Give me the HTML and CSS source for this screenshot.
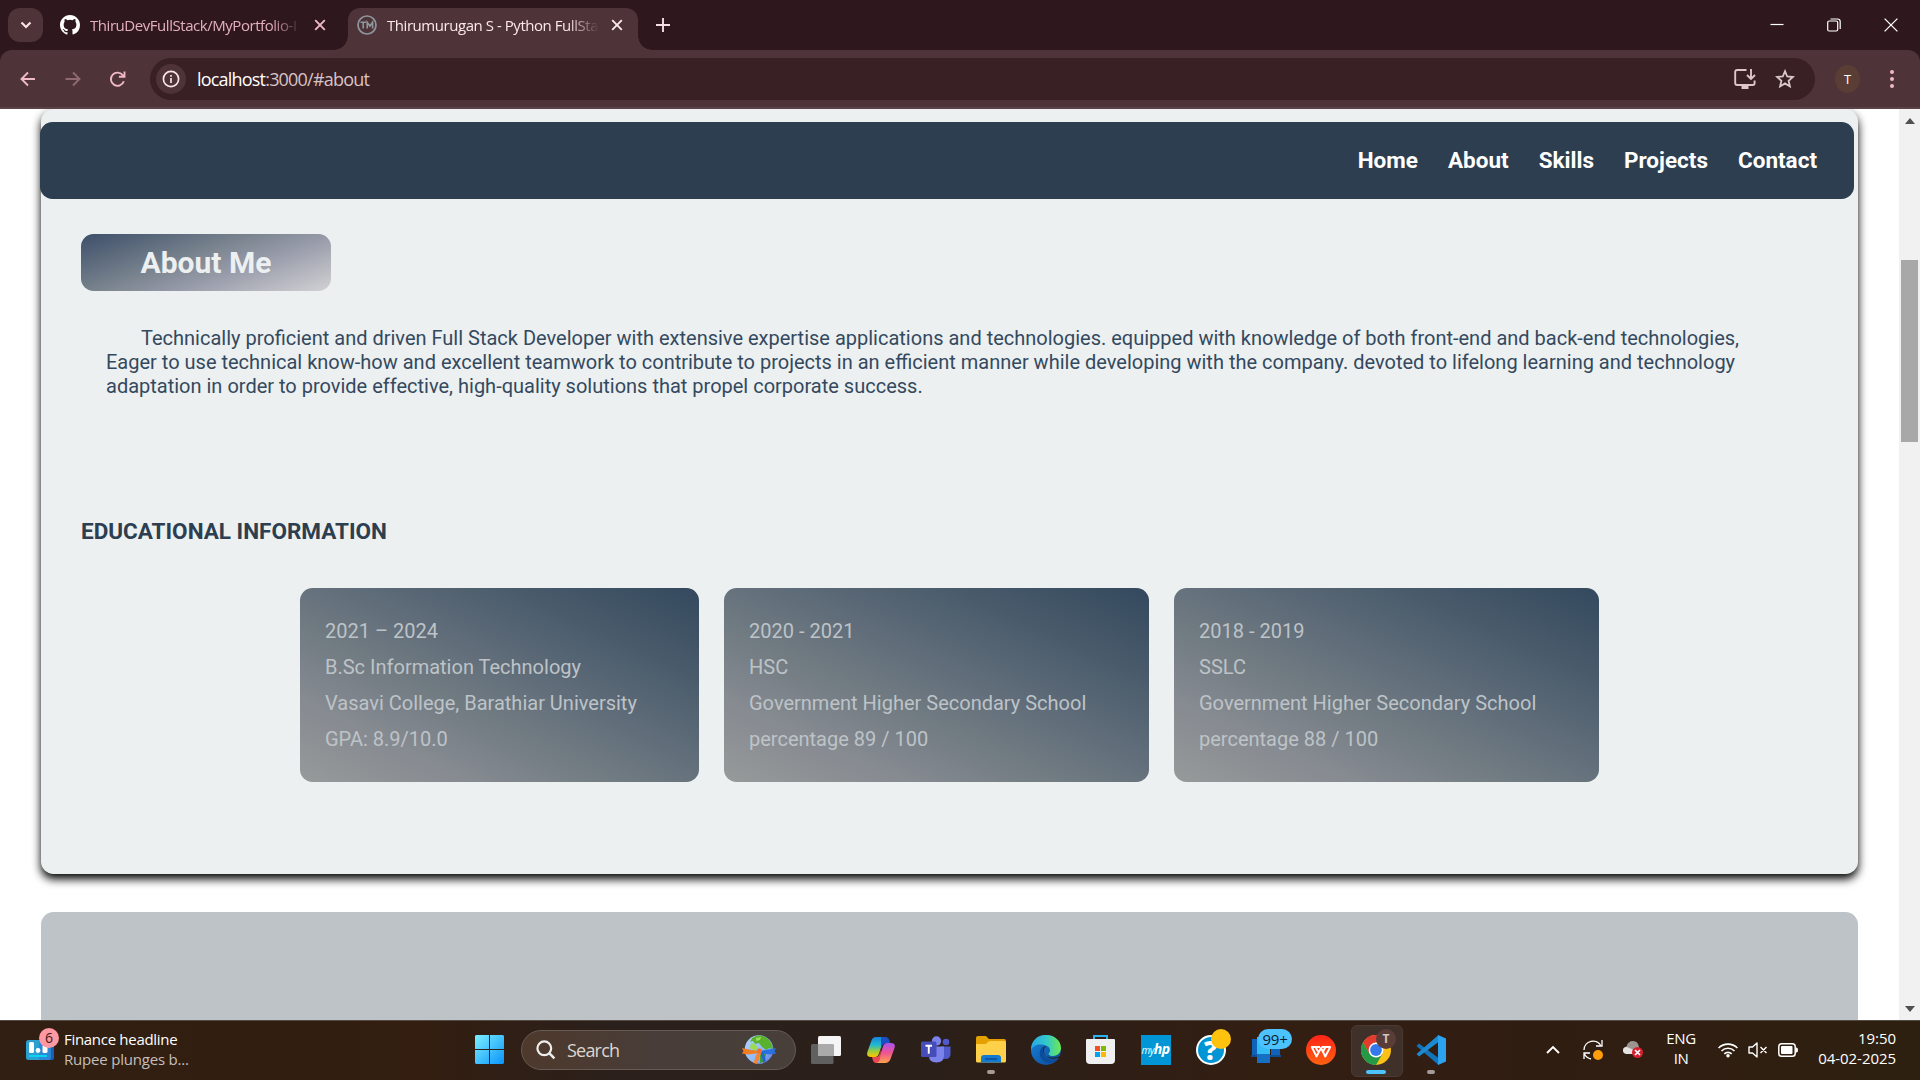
FILE: index.html
```html
<!DOCTYPE html>
<html lang="en">
<head>
<meta charset="utf-8">
<title>Thirumurugan S - Python FullStack</title>
<link rel="stylesheet" href="styles.css">
</head>
<body>
<header class="tabstrip">
  <button class="tab-search"><svg width="14" height="14" viewBox="0 0 14 14"><path d="M2.500 4.500l4.500 4.500 4.500-4.500" fill="none" stroke="#f6e3e5" stroke-width="2.200"/></svg></button>
  <div class="tab">
    <svg class="fav" width="20" height="20" viewBox="0 0 16 16"><path fill="#fff" d="M8 0C3.58 0 0 3.58 0 8c0 3.54 2.29 6.53 5.47 7.59.4.07.55-.17.55-.38 0-.19-.01-.82-.01-1.49-2.01.37-2.53-.49-2.69-.94-.09-.23-.48-.94-.82-1.13-.28-.15-.68-.52-.01-.53.63-.01 1.08.58 1.23.82.72 1.21 1.87.87 2.33.66.07-.52.28-.87.51-1.07-1.78-.2-3.64-.89-3.64-3.95 0-.87.31-1.59.82-2.15-.08-.2-.36-1.02.08-2.12 0 0 .67-.21 2.2.82a7.6 7.6 0 0 1 4 0c1.53-1.04 2.2-.82 2.2-.82.44 1.1.16 1.92.08 2.12.51.56.82 1.27.82 2.15 0 3.07-1.87 3.75-3.65 3.95.29.25.54.73.54 1.48 0 1.07-.01 1.93-.01 2.2 0 .21.15.46.55.38A8.01 8.01 0 0 0 16 8c0-4.42-3.58-8-8-8z"/></svg>
    <span class="tab-title">ThiruDevFullStack/MyPortfolio-I</span>
    <svg class="x" width="12" height="12" viewBox="0 0 12 12"><path d="M1.2 1.2l9.6 9.6M10.800 1.200l-9.600 9.600" stroke="#efb9c6" stroke-width="1.900"/></svg>
  </div>
  <div class="tab active">
    <svg class="fav" width="20" height="20" viewBox="0 0 20 20"><circle cx="10" cy="10" r="9" fill="none" stroke="#8e979d" stroke-width="1.700"/><path d="M3.500 7.200h5.500M6.200 7.200v6.300M10.200 13.500V7.200l2.700 3.800 2.700-3.800v6.300" fill="none" stroke="#8e979d" stroke-width="1.600"/></svg>
    <span class="tab-title">Thirumurugan S - Python FullSta</span>
    <svg class="x" width="12" height="12" viewBox="0 0 12 12"><path d="M1.2 1.2l9.6 9.6M10.800 1.200l-9.600 9.600" stroke="#fbe9ec" stroke-width="1.900"/></svg>
  </div>
  <svg class="plus" width="14" height="14" viewBox="0 0 14 14"><path d="M7 0v14M0 7h14" stroke="#f6dfe2" stroke-width="1.900"/></svg>
  <div class="win">
    <svg width="14" height="14" viewBox="0 0 14 14"><path d="M.5 6.500h13" stroke="#fff" stroke-width="1.200"/></svg>
    <svg width="14" height="14" viewBox="0 0 14 14"><rect x=".7" y="3" width="10" height="10" rx="1.500" fill="none" stroke="#fff" stroke-width="1.200"/><path d="M3.500 1h7a2.700 2.700 0 0 1 2.700 2.700V11" fill="none" stroke="#fff" stroke-width="1.200"/></svg>
    <svg width="14" height="14" viewBox="0 0 14 14"><path d="M.6.6l12.800 12.800M13.400.6L.6 13.400" stroke="#fff" stroke-width="1.300"/></svg>
  </div>
</header>
<div class="toolbar">
  <div class="navs">
    <svg width="20" height="20" viewBox="0 0 20 20"><path d="M17 10H4M10 3.500L3.500 10l6.500 6.500" fill="none" stroke="#efb9c6" stroke-width="1.900"/></svg>
    <svg width="20" height="20" viewBox="0 0 20 20"><path d="M2.500 10h13M10 3.500l6.500 6.500-6.500 6.500" fill="none" stroke="#8f6a71" stroke-width="1.900"/></svg>
    <svg width="20" height="20" viewBox="0 0 20 20"><path d="M15.800 12.200a6.600 6.600 0 1 1-.8-5.600l1 1.400M16.500 2.500v5.300h-5.600" fill="none" stroke="#efb9c6" stroke-width="1.900"/></svg>
  </div>
  <div class="omnibox">
    <span class="info"><svg width="18" height="18" viewBox="0 0 18 18"><circle cx="9" cy="9" r="7.600" fill="none" stroke="#f7e4e7" stroke-width="1.700"/><path d="M9 8v5M9 5v1.800" stroke="#f7e4e7" stroke-width="1.700"/></svg></span>
    <span class="url"><b>localhost</b>:3000/#about</span>
    <svg class="install" width="22" height="22" viewBox="0 0 22 22"><path d="M12.500 2H3.200Q1.200 2 1.200 4v11q0 2 2 2h15.600q1.800 0 1.800-2v-2.500M17 1v9.500M13 7l4 4 4-4" fill="none" stroke="#dcc6ca" stroke-width="1.900"/><path d="M7.500 17h7v4h-7z" fill="#dcc6ca"/></svg>
    <svg class="star" width="20" height="20" viewBox="0 0 20 20"><path d="M10 2.200l2.200 5.300 5.700.5-4.300 3.800 1.300 5.600-4.900-3-4.900 3 1.300-5.600L2.100 8l5.700-.5z" fill="none" stroke="#dcc6ca" stroke-width="1.800"/></svg>
  </div>
  <span class="avatar">T</span>
  <svg class="dots" width="6" height="20" viewBox="0 0 6 20"><g fill="#efb9c6"><circle cx="3" cy="3" r="2"/><circle cx="3" cy="10" r="2"/><circle cx="3" cy="17" r="2"/></g></svg>
</div>
<div class="viewport">
  <main class="page">
    <section class="about">
      <nav class="menu"><a>Home</a><a>About</a><a>Skills</a><a>Projects</a><a>Contact</a></nav>
      <h1 class="badge-title">About Me</h1>
      <p class="bio">Technically proficient and driven Full Stack Developer with extensive expertise applications and technologies. equipped with knowledge of both front-end and back-end technologies,<br>Eager to use technical know-how and excellent teamwork to contribute to projects in an efficient manner while developing with the company. devoted to lifelong learning and technology<br>adaptation in order to provide effective, high-quality solutions that propel corporate success.</p>
      <h2 class="edu-title">EDUCATIONAL INFORMATION</h2>
      <div class="cards">
        <div class="card"><p>2021 – 2024</p><p>B.Sc Information Technology</p><p>Vasavi College, Barathiar University</p><p>GPA: 8.9/10.0</p></div>
        <div class="card"><p>2020 - 2021</p><p>HSC</p><p>Government Higher Secondary School</p><p>percentage 89 / 100</p></div>
        <div class="card"><p>2018 - 2019</p><p>SSLC</p><p>Government Higher Secondary School</p><p>percentage 88 / 100</p></div>
      </div>
    </section>
    <section class="next"></section>
  </main>
  <div class="scrollbar">
    <svg width="10" height="6" viewBox="0 0 10 6"><path d="M5 0l5 6H0z" fill="#505050"/></svg>
    <i class="thumb"></i>
    <svg class="down" width="10" height="6" viewBox="0 0 10 6"><path d="M5 6l5-6H0z" fill="#505050"/></svg>
  </div>
</div>
<footer class="taskbar">
  <div class="widget">
    <div class="widget-icon">
      <svg width="28" height="20" viewBox="0 0 28 20"><rect x="18" width="10" height="20" rx="2" fill="#1660b5"/><rect width="24.500" height="20" rx="2.500" fill="#2a9fd0"/><rect x="13" width="11.500" height="20" rx="2" fill="#2d86d6"/><rect x="3" y="2" width="5" height="11" rx="1.500" fill="#fff"/><circle cx="12" cy="10.500" r="2.400" fill="#fff"/><rect x="16.500" y="5" width="5" height="8" rx="1.500" fill="#fff"/><path d="M3 16h18" stroke="#08d3f4" stroke-width="2"/></svg>
      <b class="count">6</b>
    </div>
    <div class="news"><div>Finance headline</div><div class="dim">Rupee plunges b...</div></div>
  </div>
  <svg class="start" width="29" height="29" viewBox="0 0 29 29"><defs><linearGradient id="w" gradientUnits="userSpaceOnUse" x2="29" y2="29"><stop stop-color="#7cf0ff"/><stop offset="1" stop-color="#0a94fb"/></linearGradient></defs><path fill="url(#w)" d="M1 0h13v14H0V1zM15 0h13l1 1v13H15zM0 15h14v14H1l-1-1zM15 15h14v13l-1 1H15z"/></svg>
  <div class="search">
    <svg width="20" height="20" viewBox="0 0 20 20"><circle cx="8.300" cy="8.300" r="6.900" fill="none" stroke="#eee" stroke-width="2.200"/><path d="M13.200 13.200l5.200 5.200" stroke="#eee" stroke-width="2.500"/></svg>
    <span>Search</span>
    <svg class="globe" width="34" height="30" viewBox="0 0 34 30"><defs><linearGradient id="gl" x2="1" y2="1"><stop stop-color="#b5d6ff"/><stop offset=".6" stop-color="#8fb9f8"/><stop offset="1" stop-color="#546fe0"/></linearGradient></defs><circle cx="17" cy="14.500" r="14.300" fill="url(#gl)"/><path d="M10 3Q17-2 25 3q5 4 6 11l-4-1-3 2-4-3-3-4-4 1-2-3-3 1z" fill="#58b22e"/><path d="M14 3l5-1-1 3-4 1zM9 8l5 2 2 3-3 3-5-3z" fill="#9bdc52"/><path d="M18 17l6 2-1 7-5 2z" fill="#3c9b36"/><path d="M0 13l7 1.500 10 1.500-3 2.500-8 1-6-1 1.500-2.500z" fill="#f07c24"/><path d="M34 13l-7 1.500-10 1.500 3 2.500 8 1 6-1-1.500-2.500z" fill="#2a70e0"/><path d="M16 15l4 1-5 13-3.500-1z" fill="#f58431"/><path d="M18 16l3 0 3 10-2.500 2z" fill="#2466cf"/><rect x="15" y="13.500" width="5" height="5" rx="2" fill="#ed702d"/></svg>
  </div>
  <div class="apps">
    <div class="app"><svg width="30" height="28" viewBox="0 0 30 28"><rect x="7" width="23" height="20" rx="1.500" fill="#f5f5f5"/><rect y="8" width="22.500" height="20" rx="1.500" fill="#606060"/><path d="M7 8h15.500v12H7z" fill="#aaa"/></svg></div>
    <div class="app"><svg width="28" height="26" viewBox="0 0 28 26"><defs><linearGradient id="c1" x2="0" y2="1"><stop stop-color="#1683df"/><stop offset=".4" stop-color="#22b9d2"/><stop offset=".7" stop-color="#9acd3c"/><stop offset="1" stop-color="#ffc400"/></linearGradient><linearGradient id="c2" x2="0" y2="1"><stop stop-color="#a951f0"/><stop offset=".5" stop-color="#ef5590"/><stop offset="1" stop-color="#ffa24c"/></linearGradient></defs><path d="M19 0H9Q5.500 0 4.300 4L.4 15Q-1 20 4 20h4q3 0 4-3.500L15.500 6Q16.500 2 19 0z" fill="url(#c1)"/><path d="M14 0h5q3 0 4 6h-4q-2.500 0-3.500 2.500L14 12z" fill="#1a50c4"/><path d="M9 26h9q4 0 5.500-4L27.500 11Q29 6 24 6h-4q-3 0-4 3.500L12.500 20q-1 4-3.500 6z" fill="url(#c2)"/><path d="M5 20h4q3 0 3.500-3L14 12l-1 10q-1 4-4 4-3 0-4-6z" fill="#e84a55"/></svg></div>
    <div class="app"><svg width="30" height="28" viewBox="0 0 30 28"><circle cx="15.500" cy="5" r="4.700" fill="#7b83eb"/><circle cx="25" cy="6" r="3.300" fill="#5059c9"/><path d="M20 10.500h9.500v7.500q0 5-5 5-4 0-4.500-4z" fill="#5059c9"/><path d="M8 10.500h15v9q0 7-7.500 7T8 20z" fill="#7b83eb"/><rect y="5.500" width="15.500" height="15.500" rx="1.500" fill="#464db8"/><path d="M4.500 9.700h6.500M7.750 9.700v8" stroke="#fff" stroke-width="1.900"/></svg></div>
    <div class="app run"><svg width="30" height="27" viewBox="0 0 30 27"><path d="M0 2q0-2 2-2h8l3 3h15q2 0 2 2v8H0z" fill="#e3a000"/><path d="M0 8h10q2-3 4-3h14q2 0 2 2v18q0 1.500-1.500 1.500h-27Q0 26.500 0 25z" fill="#ffd04a"/><path d="M5 26.500V22q0-3 3-3h14q3 0 3 3v4.500z" fill="#127acf"/><path d="M9 23h12" stroke="#0a4f98" stroke-width="1.500"/></svg></div>
    <div class="app"><svg width="30" height="30" viewBox="0 0 30 30"><defs><linearGradient id="e1" x2="1"><stop stop-color="#28a8e4"/><stop offset=".5" stop-color="#31c7cf"/><stop offset="1" stop-color="#6ee94f"/></linearGradient><linearGradient id="e2" x2="1" y2="1"><stop stop-color="#1886dc"/><stop offset="1" stop-color="#0c4693"/></linearGradient></defs><circle cx="15" cy="15" r="15" fill="url(#e2)"/><path d="M0 15C0 6 6 0 15 0c9 0 15 6 15 13 0 5-4 8-8 8-4 0-5-2-4-3 2-2 1-6-2-7C9 8 2 10 0 15z" fill="url(#e1)"/><path d="M12 11.500c-6 5-3 15 5 16 4 .5 8-1 11-4-7 3-15 0-16-6-.5-3 1-5 3-5.500z" fill="#0d4b9b"/><path d="M16 11c-4 0-6 6-1 10 4 2.500 10 2 14 0 1-.5.500 1 0 1.500l-5 1c-5 1-10-2-11-6-.5-3 1-6 3-6.500z" fill="#2b2019"/></svg></div>
    <div class="app"><svg width="29" height="29" viewBox="0 0 29 29"><path d="M8 6V1h13v5" fill="none" stroke="#2db2ee" stroke-width="2"/><path d="M0 5q0-1 1-1h27q1 0 1 1v20q0 4-4 4H4q-4 0-4-4z" fill="#f0f0f0"/><path d="M9 11h5v5H9z" fill="#f25022"/><path d="M15 11h5v5h-5z" fill="#7fba00"/><path d="M9 17h5v5H9z" fill="#00a4ef"/><path d="M15 17h5v5h-5z" fill="#ffb900"/></svg></div>
    <div class="app"><span class="myhp">my<b>hp</b></span></div>
    <div class="app"><span class="help">?</span><i class="dot"></i></div>
    <div class="app"><svg width="30" height="28" viewBox="0 0 30 28"><path d="M1 3h9v17H1zM20 10h9v10h-9z" fill="#0f63ba"/><path d="M0 19h30v2H0z" fill="#0c4d94"/><path d="M6 1h13v21H6z" fill="#34bdf5"/><path d="M6 18h13v9H6z" fill="#156fc3"/></svg><b class="many">99+</b></div>
    <div class="app"><svg width="30" height="30" viewBox="0 0 30 30"><defs><linearGradient id="wp" x2="0" y2="1"><stop stop-color="#ff2418"/><stop offset="1" stop-color="#ff6110"/></linearGradient></defs><circle cx="15" cy="15" r="15" fill="url(#wp)"/><path d="M14 12H5.800l4.700 9.500L15 13l4.300 8.500 4.900-9.500h-8.700M9.500 12l2.500 4.500M24 12h-4.500L17.500 16" fill="none" stroke="#fff" stroke-width="1.900" stroke-linejoin="round"/></svg></div>
    <div class="app on"><svg width="30" height="30" viewBox="0 0 30 30"><circle cx="15" cy="15" r="15" fill="#fbc116"/><path d="M2 7.500A15 15 0 0 1 28 7.500H15L8.500 19z" fill="#e33b2e"/><path d="M2 7.500A15 15 0 0 0 15 30l6.500-11.300H8.500z" fill="#249a48"/><circle cx="15" cy="15" r="7.400" fill="#fff"/><circle cx="15" cy="15" r="5.900" fill="#3478ec"/></svg><b class="prof">T</b></div>
    <div class="app run"><svg width="30" height="30" viewBox="0 0 30 30"><path d="M3 8.500L22.500 23v7L.5 11z" fill="#1275ba"/><path d="M3 21.500L22.500 7V0L.5 19z" fill="#1c8ad0"/><path d="M22 0l8 3.500v23L22 30z" fill="#2ba3ee"/></svg></div>
  </div>
  <div class="tray">
    <svg width="14" height="9" viewBox="0 0 14 9"><path d="M1 8l6-6 6 6" fill="none" stroke="#fff" stroke-width="1.900"/></svg>
    <svg class="sync" width="20" height="20" viewBox="0 0 20 20"><path d="M1 10A9 9 0 0 1 18 6M19 0v6h-6M1 19v-6h6M1.500 14q2 4 6.500 5" fill="none" stroke="#fff" stroke-width="1.300"/><circle cx="15" cy="15" r="5" fill="#ff9d0a"/></svg>
    <svg class="cloud" width="20" height="17" viewBox="0 0 20 17"><path d="M3 12Q0 12 0 9q0-3 3.500-3.500Q5 0 10 0q5 0 6 6v6z" fill="#9b9491"/><path d="M3 13Q0 12 0 9.500 0 6 4 6l9 4v3z" fill="#e5e3e2"/><circle cx="14.500" cy="11.500" r="5.500" fill="#d7202f"/><path d="M12 9l5 5M17 9l-5 5" stroke="#fff" stroke-width="1.700"/></svg>
    <div class="lang">ENG<br>IN</div>
    <svg class="wifi" width="20" height="16" viewBox="0 0 20 16"><g fill="none" stroke="#fff" stroke-width="1.600"><path d="M.6 6a13.300 13.300 0 0 1 18.800 0M3.500 9a9.200 9.200 0 0 1 13 0M6.300 11.900a5.200 5.200 0 0 1 7.400 0"/></g><circle cx="10" cy="13.700" r="1.800" fill="#fff"/></svg>
    <svg class="vol" width="20" height="16" viewBox="0 0 20 16"><path d="M1 5h3.500L9 1v14l-4.500-4H1zM12.500 5l6 6M18.500 5l-6 6" fill="none" stroke="#fff" stroke-width="1.400" stroke-linejoin="round"/></svg>
    <svg class="bat" width="20" height="14" viewBox="0 0 20 14"><rect x=".8" y=".8" width="16.400" height="12.400" rx="2.800" fill="none" stroke="#fff" stroke-width="1.500"/><rect x="3" y="3" width="11.500" height="8" rx="1" fill="#fff"/><path d="M18 4.500h.5q1.500 0 1.500 2.500t-1.500 2.500H18z" fill="#fff"/></svg>
    <div class="clock">19:50<br>04-02-2025</div>
  </div>
</footer>
</body>
</html>
```
FILE: styles.css
```css
* { box-sizing: border-box; margin: 0; padding: 0; }
body { width: 1920px; height: 1080px; overflow: hidden; display: flex; flex-direction: column; background: #fff; font-family: "Open Sans", "Noto Sans", sans-serif; }
svg { display: block; flex: none; }
button { border: 0; }

.tabstrip { height: 50px; flex: none; background: #2f181d; display: flex; align-items: center; padding-left: 8px; }
.tab-search { width: 35px; height: 34px; border-radius: 12px; background: #4e3338; display: grid; place-items: center; flex: none; }
.tab { width: 305px; height: 42px; margin-top: 8px; padding: 0 22px 8px 17px; display: flex; align-items: center; color: #e5b0bd; flex: none; }
.tab.active { width: 290px; padding: 0 15px 8px 9px; background: #4e3338; border-radius: 12px 12px 0 0; color: #fbe9ec; position: relative; }
.tab.active::before, .tab.active::after { content: ""; position: absolute; bottom: 0; width: 14px; height: 14px; }
.tab.active::before { left: -14px; background: radial-gradient(circle at 0 0, transparent 13.5px, #4e3338 14px); }
.tab.active::after { right: -14px; background: radial-gradient(circle at 100% 0, transparent 13.5px, #4e3338 14px); }
.tab-title { width: 213px; margin-left: 10px; white-space: nowrap; font-size: 15px; letter-spacing: -0.45px; mask-image: linear-gradient(90deg, #000 180px, transparent 212px); }
.x { margin-left: auto; }
.plus { margin-left: 18px; }
.win { margin-left: auto; display: flex; gap: 43px; padding-right: 22px; }

.toolbar { height: 59px; flex: none; background: #4e3338; border-bottom: 2px solid #5c4247; border-radius: 12px 12px 0 0; box-shadow: 0 0 0 12px #2f181d; clip-path: inset(0); display: flex; align-items: center; padding: 0 25px 0 18px; }
.navs { display: flex; gap: 25px; width: 132px; }
.omnibox { width: 1665px; height: 42px; margin-top: 1px; border-radius: 21px; background: #382024; display: flex; align-items: center; padding: 0 20px 0 6px; }
.info { width: 30px; height: 30px; border-radius: 50%; background: #4e3338; display: grid; place-items: center; }
.url { margin-left: 11px; font-size: 18px; letter-spacing: -0.8px; color: #d8c3c6; }
.url b { font-weight: 400; color: #fff; }
.install { margin-left: auto; margin-right: 19px; }
.avatar { width: 25px; height: 28px; margin-left: 20px; border-radius: 50%; background: #5a3d34; color: #fff; font-size: 13px; display: grid; place-items: center; }
.dots { margin-left: auto; }

.viewport { flex: 1; min-height: 0; display: flex; overflow: hidden; font-family: Roboto, sans-serif; }
.page { width: 1899px; height: 911px; overflow: hidden; padding-left: 41px; }
.about { width: 1817px; height: 765px; border-radius: 12.5px; background: #ecf0f1; box-shadow: 0 5px 10px 0 #000; padding-top: 13px; }
.menu { width: 1814px; height: 77px; margin-left: -1px; border-radius: 12.5px; background: #2c3e50; display: flex; justify-content: flex-end; align-items: center; gap: 30px; padding: 0 37px 2px 0; color: #fff; font-weight: 700; font-size: 22.5px; }
.badge-title { width: 250px; height: 57px; margin: 35px 0 0 40px; border-radius: 12.5px; background: linear-gradient(160deg, #3d4f69, #7a848f 42%, #9a9dab 64%, #d2d2d4); color: #ecf0f1; text-align: center; font-size: 30px; line-height: 57px; }
.bio { margin: 35px 0 0 65px; color: #34495e; font-size: 20px; line-height: 24px; text-indent: 35px; white-space: nowrap; }
.edu-title { margin: 118px 0 0 40px; font-size: 22.5px; line-height: 30px; color: #2c3e50; }
.cards { display: grid; grid-template-columns: 399px 425px 425px; gap: 25px; height: 194px; margin: 42px 0 0 259px; }
.card { border-radius: 12.5px; padding: 25px; background: linear-gradient(to top right, #969a9a, #868a91 22%, #717b82 40%, #5f6c79 57%, #495b6b 77%, #34495e); color: #bdc3c7; font-size: 20px; line-height: 36px; white-space: nowrap; }
.next { width: 1817px; height: 120px; margin-top: 38px; border-radius: 12.5px 12.5px 0 0; background: #bdc3c7; }
.scrollbar { width: 21px; background: #f1f1f1; display: flex; flex-direction: column; align-items: center; padding: 9px 0 8px; }
.thumb { width: 17px; height: 182px; margin-top: 136px; background: #a8a8a8; }
.down { margin-top: auto; }

.taskbar { height: 60px; flex: none; border-top: 1px solid #514b43; padding-bottom: 2px; background: linear-gradient(90deg, #301f12 0, #331e11 22%, #2b201b 32%, #2a1f19 48%, #331e12 66%, #301d12 80%, #2e2010 100%); display: flex; align-items: center; color: #fff; font-size: 15px; line-height: 20px; }
.widget { width: 475px; padding-left: 26px; display: flex; align-items: center; gap: 10px; }
.widget-icon { position: relative; }
.count { position: absolute; left: 13px; top: -12px; width: 20px; height: 20px; border-radius: 50%; background: #fe98a2; color: #3a1b1b; font-size: 14px; font-weight: 400; text-align: center; }
.news { letter-spacing: -0.3px; padding-bottom: 2px; }
.dim { color: #c5bfba; letter-spacing: -0.2px; }
.search { width: 275px; height: 40px; margin-left: 17px; border-radius: 20px; border: 1px solid #665a53; background: linear-gradient(90deg, #4e392c, #483d39 50%, #483f3a); display: flex; align-items: center; padding: 0 19px 0 14px; font-size: 18px; letter-spacing: -0.8px; color: #dcd6d2; }
.search span { margin-left: 11px; }
.globe { margin-left: auto; }
.apps { display: flex; margin-left: 2px; }
.app { width: 55px; height: 50px; display: grid; place-items: center; position: relative; }
.app.on::before { content: ""; position: absolute; left: 3px; top: 0; width: 50px; height: 50px; border-radius: 6px; background: #40302a; border: 1px solid #4a3a33; }
.app > svg { position: relative; }
.app.run::after, .app.on::after { content: ""; position: absolute; bottom: 1px; left: 24px; width: 8px; height: 4px; border-radius: 2px; background: #a39b96; }
.app.on::after { left: 18px; width: 20px; background: #4cc2ff; }
.myhp { width: 30px; height: 30px; background: #0096d6; font-size: 10px; font-style: italic; line-height: 28px; text-align: center; letter-spacing: -0.5px; }
.myhp b { font-size: 14px; }
.help { width: 30px; height: 30px; border: 2px solid #fff; border-radius: 50%; background: #0096d6; font-size: 26px; font-weight: 800; line-height: 26px; text-align: center; }
.dot { position: absolute; left: 28px; top: 4px; width: 20px; height: 20px; border-radius: 50%; background: #ffc20e; }
.many { position: absolute; left: 20px; top: 4px; width: 34px; height: 20px; border-radius: 10px; background: #4cc2ff; color: #10202a; font-weight: 400; text-align: center; letter-spacing: -0.3px; }
.prof { position: absolute; left: 28px; top: 4px; width: 20px; height: 20px; border-radius: 50%; background: #5a3d36; color: #cfc4c0; font-size: 12px; text-align: center; }
.tray { margin-left: auto; display: flex; align-items: center; padding-right: 24px; }
.sync { margin-left: 23px; }
.cloud { margin-left: 20px; }
.lang { width: 40px; margin-left: 18px; padding-bottom: 3px; text-align: center; letter-spacing: -0.4px; }
.wifi { margin-left: 17px; }
.vol, .bat { margin-left: 10px; }
.clock { width: 90px; margin-left: 8px; padding-bottom: 3px; text-align: right; letter-spacing: -0.05px; }
```
